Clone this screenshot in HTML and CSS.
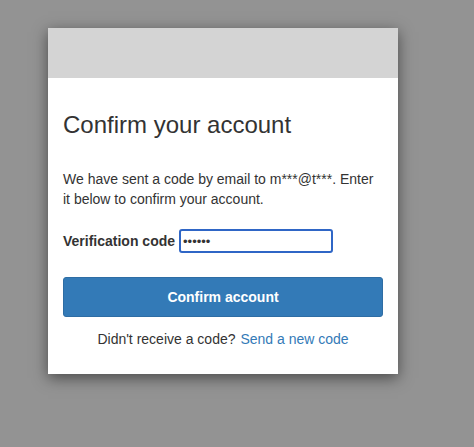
FILE: index.html
```html
<!DOCTYPE html>
<html>

<head>
    <title>Confirm your account</title>
    <link rel="stylesheet" href="styles.css">
</head>

<body class="backdrop">
    <div class="modal">
        <div class="modal-header"></div>
        <div class="modal-body">
            <h1 class="title">Confirm your account</h1>
            <p class="note">We have sent a code by email to m***@t***. Enter it below to confirm your account.</p>
            <div class="field">
                <label for="code" class="field-label">Verification code</label>
                <input type="text" id="code" class="field-input" value="••••••" autofocus />
            </div>
            <button class="btn-primary">Confirm account</button>
            <div class="resend">
                <span>Didn't receive a code?</span>
                <a href="#" class="resend-link">Send a new code</a>
            </div>
        </div>
    </div>
</body>

</html>
```

FILE: styles.css
```css
body {
    margin: 0;
    font-family: "Liberation Sans", Arial, sans-serif;
    font-size: 14px;
    line-height: 20px;
    color: #333;
}

.backdrop {
    background-color: #939393;
    min-height: 447px;
    padding: 28px 0 0 48px;
    box-sizing: border-box;
}

.modal {
    width: 350px;
    background-color: #fff;
    box-shadow: 0 4px 14px rgba(0, 0, 0, 0.5);
}

.modal-header {
    height: 50px;
    background-color: #d4d4d4;
}

.modal-body {
    padding: 34px 15px 25px;
}

.title {
    margin: 0;
    font-size: 24px;
    font-weight: normal;
    line-height: 26px;
}

.note {
    margin: 31px 0 0;
}

.field {
    display: flex;
    align-items: center;
    gap: 4px;
    margin-top: 20px;
}

.field-label {
    font-weight: bold;
}

.field-input {
    width: 154px;
    height: 24px;
    box-sizing: border-box;
    border: 2px solid #2f66c6;
    border-radius: 3px;
    padding: 0 2px;
    font-family: "Liberation Sans", Arial, sans-serif;
    font-size: 13px;
    color: #333;
    caret-color: #000;
    outline: none;
}

.btn-primary {
    display: block;
    width: 100%;
    height: 40px;
    margin-top: 24px;
    border: 1px solid #2e6da4;
    border-radius: 3px;
    background-color: #337ab7;
    color: #fff;
    font-family: "Liberation Sans", Arial, sans-serif;
    font-size: 14px;
    font-weight: bold;
}

.resend {
    margin-top: 12px;
    text-align: center;
}

.resend-link {
    margin-left: 1px;
    color: #337ab7;
    text-decoration: none;
}
```
